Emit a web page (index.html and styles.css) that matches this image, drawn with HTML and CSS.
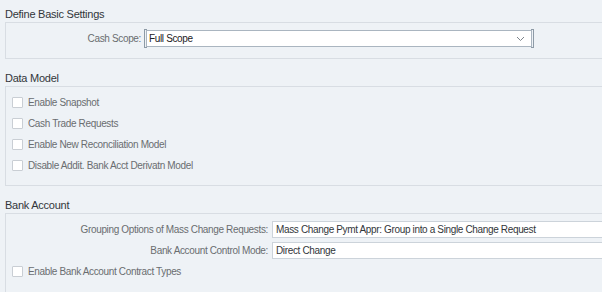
FILE: index.html
```html
<!DOCTYPE html>
<html lang="en">
<head>
  <meta charset="UTF-8">
  <title>Cash Management Settings</title>
  <link rel="stylesheet" href="styles.css">
</head>
<body>
  <main class="page">
    <section class="group">
      <h2 class="group-title">Define Basic Settings</h2>
      <div class="panel panel-basic">
        <div class="form-row">
          <label class="form-label label-basic">Cash Scope:</label>
          <div class="select focused">
            <span class="select-value">Full Scope</span>
            <svg class="chevron" width="9" height="6" viewBox="0 0 9 6">
              <path d="M1 1 L4.5 4.5 L8 1" fill="none" stroke="#7d848b" stroke-width="1"/>
            </svg>
          </div>
        </div>
      </div>
    </section>

    <section class="group">
      <h2 class="group-title">Data Model</h2>
      <div class="panel panel-model">
        <div class="check-row"><span class="checkbox"></span>Enable Snapshot</div>
        <div class="check-row"><span class="checkbox"></span>Cash Trade Requests</div>
        <div class="check-row"><span class="checkbox"></span>Enable New Reconciliation Model</div>
        <div class="check-row"><span class="checkbox"></span>Disable Addit. Bank Acct Derivatn Model</div>
      </div>
    </section>

    <section class="group">
      <h2 class="group-title">Bank Account</h2>
      <div class="panel panel-bank">
        <div class="form-row">
          <label class="form-label label-bank">Grouping Options of Mass Change Requests:</label>
          <div class="text-field">Mass Change Pymt Appr: Group into a Single Change Request</div>
        </div>
        <div class="form-row">
          <label class="form-label label-bank">Bank Account Control Mode:</label>
          <div class="text-field">Direct Change</div>
        </div>
        <div class="check-row"><span class="checkbox"></span>Enable Bank Account Contract Types</div>
      </div>
    </section>
  </main>
</body>
</html>
```

FILE: styles.css
```css
body {
  margin: 0;
  background-color: #eef2f6;
  font-family: "Liberation Sans", Arial, sans-serif;
  color: #32363a;
  letter-spacing: -0.35px;
  overflow: hidden;
}
.page {
  padding-left: 5px;
  margin-right: -30px;
}
.group-title {
  margin: 0;
  height: 22px;
  padding-top: 8px;
  box-sizing: border-box;
  font-size: 11px;
  font-weight: normal;
  line-height: 13px;
  letter-spacing: -0.25px;
  color: #32363a;
}
.group + .group .group-title {
  height: 27px;
  padding-top: 13px;
}
.panel {
  display: flex;
  flex-direction: column;
  border: 1px solid #d8dde3;
  border-right: none;
}
.panel-basic {
  padding: 7px 0 11px;
}
.panel-model {
  padding: 5px 0 9px;
}
.panel-bank {
  padding: 7px 0 10px;
  gap: 4px;
}
.form-row {
  display: flex;
  align-items: center;
  height: 17px;
}
.form-label {
  flex: 0 0 auto;
  padding-right: 5px;
  text-align: right;
  font-size: 10px;
  color: #6a6d70;
}
.label-basic {
  width: 135px;
}
.label-bank {
  width: 262px;
  padding-right: 4px;
}
.select {
  position: relative;
  display: flex;
  align-items: center;
  justify-content: space-between;
  width: 386px;
  height: 17px;
  box-sizing: border-box;
  padding: 0 6px 0 2px;
  background: #fff;
  border: 1px solid #aab5c0;
  font-size: 10px;
  color: #1d2124;
}
/* focus brackets on the dropdown */
.select.focused::before,
.select.focused::after {
  content: "";
  position: absolute;
  top: -2px;
  bottom: -2px;
  width: 2px;
  border: 1px solid #8d9aa6;
}
.select.focused::before {
  left: -3px;
  border-right: none;
}
.select.focused::after {
  right: -3px;
  border-left: none;
}
.chevron {
  display: block;
}
.text-field {
  flex: 1;
  height: 17px;
  box-sizing: border-box;
  padding: 0 3px;
  line-height: 15px;
  background: #fff;
  border: 1px solid #ccd3da;
  font-size: 10px;
  color: #32363a;
}
.check-row {
  display: flex;
  align-items: center;
  height: 21px;
  padding-left: 6px;
  font-size: 10px;
  color: #6a6d70;
}
.panel-bank .check-row {
  margin-top: -2px;
}
.checkbox {
  width: 9px;
  height: 9px;
  margin-right: 5px;
  background: #fff;
  border: 1px solid #c9ced4;
  border-radius: 1px;
}
```
